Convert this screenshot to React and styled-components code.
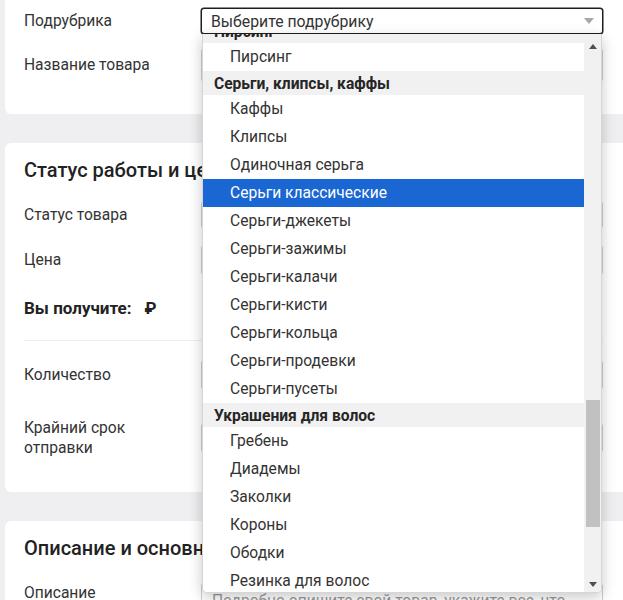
import React from "react";
import styled, { createGlobalStyle } from "styled-components";

const Global = createGlobalStyle`
  html, body { margin: 0; padding: 0; }
  body {
    background: #efeef0;
    font-family: Roboto, "Noto Sans", Arial, sans-serif;
    color: #333;
    overflow: hidden;
    width: 623px;
    height: 600px;
  }
`;

const Page = styled.div`
  position: relative;
  width: 623px;
  height: 600px;
  overflow: hidden;
`;

const Card = styled.section`
  background: #fff;
  margin: 0 -20px ${(p) => p.$gap || 0}px 5px;
  border-radius: ${(p) => (p.$first ? "0 0 6px 6px" : "6px")};
  padding: ${(p) => p.$pt}px 0 ${(p) => p.$pb}px 19px;
  display: flex;
  flex-direction: column;
`;

const Title = styled.h2`
  margin: 0;
  height: 30px;
  line-height: 30px;
  font-size: 20px;
  font-weight: 500;
  color: #222;
  white-space: nowrap;
`;

const Row = styled.div`
  display: grid;
  grid-template-columns: 177px 402px;
  align-items: ${(p) => (p.$top ? "start" : "center")};
  min-height: ${(p) => p.$h || 30}px;
  margin-top: ${(p) => p.$mt || 0}px;
`;

const Label = styled.div`
  font-size: 15.6px;
  line-height: 20px;
  color: #333;
  padding-top: ${(p) => p.$pt || 0}px;
`;

const Strong = styled.div`
  font-size: 17px;
  font-weight: 700;
  color: #222;
  display: flex;
  gap: 13px;
  white-space: nowrap;
`;

const Divider = styled.div`
  height: 1px;
  background: #eeeeee;
  margin: ${(p) => p.$mt}px 20px 0 0;
  width: 579px;
`;

const SelectBox = styled.div`
  box-sizing: border-box;
  height: ${(p) => p.$h || 26}px;
  border: 1px solid ${(p) => (p.$focus ? "#1e1e1e" : "#cfcfcf")};
  border-radius: 3px;
  background: #fff;
  display: flex;
  align-items: center;
  justify-content: space-between;
  padding: 0 8px 0 9px;
  font-size: 15.8px;
  color: #333;
  box-shadow: ${(p) => (p.$focus ? "0 0 0 0.5px #1e1e1e" : "none")};
`;

const Caret = styled.span`
  width: 0;
  height: 0;
  border-left: 5px solid transparent;
  border-right: 5px solid transparent;
  border-top: 6px solid #a8a8a8;
`;

const Input = styled.div`
  box-sizing: border-box;
  height: ${(p) => p.$h || 30}px;
  border: 1px solid #cfcfcf;
  border-radius: 3px;
  background: #fff;
`;

const TextArea = styled.div`
  box-sizing: border-box;
  height: 80px;
  border: 1px solid #cfcfcf;
  border-radius: 3px;
  padding: 7px 10px;
  font-size: 15.6px;
  line-height: 20px;
  color: #9a9a9a;
  white-space: nowrap;
  overflow: hidden;
`;

const Dropdown = styled.div`
  position: absolute;
  left: 202px;
  top: 34px;
  width: 400px;
  height: 559px;
  box-sizing: border-box;
  background: #fff;
  border: 1px solid #d6d6d6;
  border-top: none;
  border-radius: 0 0 5px 5px;
  box-shadow: 0 4px 14px rgba(0, 0, 0, 0.22);
  display: flex;
  overflow: hidden;
`;

const List = styled.div`
  flex: 1;
  overflow: hidden;
`;

const ListInner = styled.div`
  margin-top: -15px;
`;

const Group = styled.div`
  height: 24px;
  line-height: 26px;
  padding-left: 11px;
  background: #f1f1f1;
  font-size: 15.6px;
  font-weight: 700;
  color: #262626;
  white-space: nowrap;
`;

const Option = styled.div`
  height: 28px;
  line-height: 28px;
  padding-left: 27px;
  font-size: 15.6px;
  color: ${(p) => (p.$sel ? "#fff" : "#333")};
  background: ${(p) => (p.$sel ? "#1a66d2" : "transparent")};
  white-space: nowrap;
`;

const Scrollbar = styled.div`
  width: 17px;
  background: #f1f1f1;
  display: flex;
  flex-direction: column;
  align-items: center;
`;

const Arrow = styled.span`
  width: 0;
  height: 0;
  border-left: 4px solid transparent;
  border-right: 4px solid transparent;
  ${(p) =>
    p.$up
      ? "border-bottom: 5px solid #505050; margin-top: 10px;"
      : "border-top: 5px solid #505050; margin-bottom: 5px;"}
`;

const Track = styled.div`
  flex: 1;
  width: 100%;
  display: flex;
  flex-direction: column;
  align-items: center;
  padding-top: ${(p) => p.$offset}px;
  box-sizing: border-box;
`;

const Thumb = styled.div`
  width: 14px;
  height: 127px;
  background: #c1c1c1;
`;

const items = [
  { g: "Пирсинг" },
  { o: "Пирсинг" },
  { g: "Серьги, клипсы, каффы" },
  { o: "Каффы" },
  { o: "Клипсы" },
  { o: "Одиночная серьга" },
  { o: "Серьги классические", sel: true },
  { o: "Серьги-джекеты" },
  { o: "Серьги-зажимы" },
  { o: "Серьги-калачи" },
  { o: "Серьги-кисти" },
  { o: "Серьги-кольца" },
  { o: "Серьги-продевки" },
  { o: "Серьги-пусеты" },
  { g: "Украшения для волос" },
  { o: "Гребень" },
  { o: "Диадемы" },
  { o: "Заколки" },
  { o: "Короны" },
  { o: "Ободки" },
  { o: "Резинка для волос" },
  { o: "Шпильки" },
];

export default function App() {
  return (
    <Page>
      <Global />
      <Card $first $pt={8} $pb={32} $gap={29}>
        <Row $h={26}>
          <Label>Подрубрика</Label>
          <SelectBox $focus>
            <span>Выберите подрубрику</span>
            <Caret />
          </SelectBox>
        </Row>
        <Row $h={34} $mt={14}>
          <Label>Название товара</Label>
          <Input $h={34} />
        </Row>
      </Card>

      <Card $pt={12} $pb={34} $gap={29}>
        <Title>Статус работы и цена</Title>
        <Row $mt={15}>
          <Label>Статус товара</Label>
          <SelectBox $h={28}>
            <span />
            <Caret />
          </SelectBox>
        </Row>
        <Row $mt={15}>
          <Label>Цена</Label>
          <Input />
        </Row>
        <Row $mt={18}>
          <Strong>
            <span>Вы получите:</span>
            <span>₽</span>
          </Strong>
        </Row>
        <Divider $mt={17} />
        <Row $mt={19}>
          <Label>Количество</Label>
          <Input />
        </Row>
        <Row $h={40} $mt={28}>
          <Label>
            Крайний срок
            <br />
            отправки
          </Label>
          <Input />
        </Row>
      </Card>

      <Card $pt={12} $pb={20}>
        <Title>Описание и основные характеристики</Title>
        <Row $top $mt={20} $h={80}>
          <Label>Описание</Label>
          <TextArea>Подробно опишите свой товар, укажите все, что</TextArea>
        </Row>
      </Card>

      <Dropdown>
        <List>
          <ListInner>
            {items.map((it, i) =>
              it.g ? (
                <Group key={i}>{it.g}</Group>
              ) : (
                <Option key={i} $sel={it.sel}>
                  {it.o}
                </Option>
              )
            )}
          </ListInner>
        </List>
        <Scrollbar>
          <Arrow $up />
          <Track $offset={351}>
            <Thumb />
          </Track>
          <Arrow />
        </Scrollbar>
      </Dropdown>
    </Page>
  );
}
